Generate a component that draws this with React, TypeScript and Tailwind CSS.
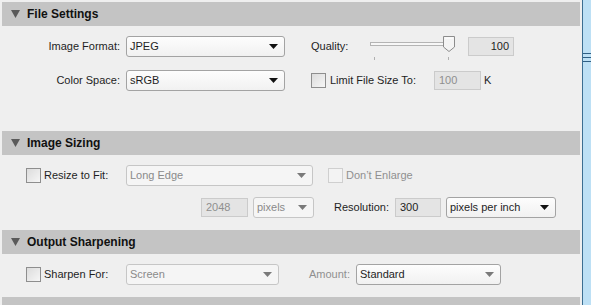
import React from 'react';

const font = { fontFamily: '"Liberation Sans", Arial, sans-serif' };

const Arrow = ({ color }: { color: string }) => (
    <svg width="9" height="5" viewBox="0 0 9 5" className="shrink-0">
        <path d="M0 0 H9 L4.5 5 Z" fill={color} />
    </svg>
);

const Select = ({ value, width, disabled = false, dimArrow = false }: { value: string; width: string; disabled?: boolean; dimArrow?: boolean }) => (
    <div
        className={`${width} h-[21px] flex items-center justify-between pl-[3px] pr-[6px] rounded-[3px] border ${
            disabled ? 'border-[#c6c6c6] bg-[#f5f5f5] text-[#8a8a8a]' : 'border-[#a3a3a3] bg-gradient-to-b from-[#fdfdfd] to-[#f1f1f1] text-[#1e1e1e]'
        }`}
    >
        <span>{value}</span>
        <Arrow color={disabled || dimArrow ? '#7a7a7a' : '#111'} />
    </div>
);

const Field = ({ value, width, align = 'left', disabled = false, className = '' }: { value: string; width: string; align?: 'left' | 'right'; disabled?: boolean; className?: string }) => (
    <div
        className={`${width} h-[19px] flex items-center px-[4px] border border-[#cbcbcb] bg-[#e4e4e4] ${
            align === 'right' ? 'justify-end' : 'justify-start'
        } ${disabled ? 'text-[#8f8f8f]' : 'text-[#1e1e1e]'} ${className}`}
    >
        {value}
    </div>
);

const Check = ({ disabled = false }: { disabled?: boolean }) => (
    <div
        className={`w-[15px] h-[15px] shrink-0 border ${
            disabled ? 'border-[#cfcfcf] bg-[#f3f3f3]' : 'border-[#8e8e8e] bg-gradient-to-br from-[#dcdcdc] to-[#f6f6f6]'
        }`}
    />
);

const Slider = () => (
    <svg width="88" height="26" viewBox="0 0 88 26" className="shrink-0 self-start mt-[-1px]">
        <rect x="0.5" y="7.5" width="80" height="3" fill="#f7f7f7" stroke="#b4b4b4" />
        <path d="M73.5 1.5 H84.5 V12 L79 16.5 L73.5 12 Z" fill="#f4f4f4" stroke="#8c8c8c" />
        <path d="M75 3 H83" stroke="#ffffff" />
        <line x1="4.5" y1="22" x2="4.5" y2="25" stroke="#b0b0b0" />
        <line x1="78.5" y1="22" x2="78.5" y2="25" stroke="#b0b0b0" />
    </svg>
);

const Header = ({ title }: { title: string }) => (
    <div className="h-[24px] ml-[2px] bg-[#c4c4c4] flex items-center shrink-0">
        <svg width="9" height="8" viewBox="0 0 9 8" className="ml-[9px]">
            <path d="M0 0 H9 L4.5 8 Z" fill="#5a5a5a" />
        </svg>
        <span className="ml-[7px] text-[12px] font-bold text-[#111]">{title}</span>
    </div>
);

export default function App() {
    return (
        <div className="w-[591px] h-[305px] overflow-hidden bg-[#efefef] flex text-[11px] text-[#1e1e1e]" style={font}>
            {/* panel */}
            <div className="w-[580px] pt-[2px] flex flex-col">
                <Header title="File Settings" />
                <div className="h-[105px] shrink-0 pt-[10px] flex flex-col gap-[13px]">
                    <div className="flex items-center h-[21px]">
                        <span className="w-[120px] text-right">Image Format:</span>
                        <div className="ml-[6px]"><Select value="JPEG" width="w-[159px]" /></div>
                        <span className="ml-[26px] w-[59px]">Quality:</span>
                        <Slider />
                        <Field value="100" width="w-[46px]" align="right" className="ml-[10px]" />
                    </div>
                    <div className="flex items-center h-[21px]">
                        <span className="w-[120px] text-right">Color Space:</span>
                        <div className="ml-[6px]"><Select value="sRGB" width="w-[159px]" /></div>
                        <div className="ml-[26px]"><Check /></div>
                        <span className="ml-[4px] w-[104px]">Limit File Size To:</span>
                        <Field value="100" width="w-[47px]" disabled />
                        <span className="ml-[3px]">K</span>
                    </div>
                </div>

                <Header title="Image Sizing" />
                <div className="h-[75px] shrink-0 pt-[10px] flex flex-col gap-[11px]">
                    <div className="flex items-center h-[21px]">
                        <div className="ml-[26px]"><Check /></div>
                        <span className="ml-[3px] w-[82px]">Resize to Fit:</span>
                        <Select value="Long Edge" width="w-[187px]" disabled />
                        <div className="ml-[15px]"><Check disabled /></div>
                        <span className="ml-[3px] text-[#8f8f8f]">Don’t Enlarge</span>
                    </div>
                    <div className="flex items-center h-[21px]">
                        <Field value="2048" width="w-[47px]" disabled className="ml-[201px]" />
                        <div className="ml-[5px]"><Select value="pixels" width="w-[61px]" disabled /></div>
                        <span className="ml-[20px] w-[61px]">Resolution:</span>
                        <Field value="300" width="w-[46px]" />
                        <div className="ml-[5px]"><Select value="pixels per inch" width="w-[110px]" /></div>
                    </div>
                </div>

                <Header title="Output Sharpening" />
                <div className="h-[43px] shrink-0 pt-[10px]">
                    <div className="flex items-center h-[21px]">
                        <div className="ml-[26px]"><Check /></div>
                        <span className="ml-[3px] w-[82px]">Sharpen For:</span>
                        <Select value="Screen" width="w-[153px]" disabled />
                        <span className="ml-[30px] w-[47px] text-[#8f8f8f]">Amount:</span>
                        <div className="text-[#333]"><Select value="Standard" width="w-[145px]" dimArrow /></div>
                    </div>
                </div>

                <Header title="" />
            </div>

            {/* window edge */}
            <div className="w-[2px] shrink-0 bg-[#efefef]" />
            <div className="w-[1px] shrink-0 bg-[#3c6e92]" />
            <div className="flex-1 bg-[#bde0f5] flex flex-col">
                <div className="mt-[53px] flex flex-col gap-[3px]">
                    <div className="h-[1px] bg-[#2f5f84]" />
                    <div className="h-[1px] bg-[#2f5f84]" />
                    <div className="h-[1px] bg-[#2f5f84]" />
                </div>
            </div>
        </div>
    );
}
